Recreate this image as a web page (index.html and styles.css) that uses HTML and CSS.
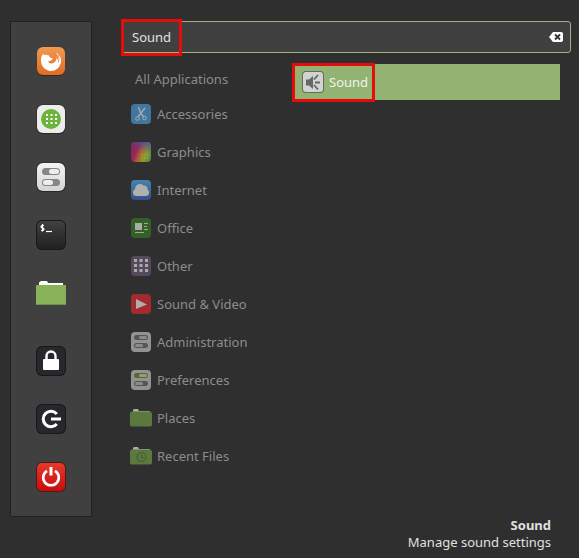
FILE: index.html
```
<!DOCTYPE html>
<html lang="en">
<head>
  <meta charset="UTF-8">
  <meta name="viewport" content="width=device-width, initial-scale=1.0">
  <title>Menu</title>
  <link rel="stylesheet" href="styles.css">
</head>
<body>

  <div class="menu">
    <nav class="favorites" aria-label="Favorites">
      <button type="button" aria-label="Firefox">
        <svg viewBox="0 0 30 30">
          <defs><linearGradient id="fox" x1="0" y1="0" x2="0" y2="1"><stop offset="0" stop-color="#f19a50"/><stop offset="1" stop-color="#e06c22"/></linearGradient></defs>
          <rect x="1" y="2" width="28" height="28" rx="6" fill="#38271f"/>
          <rect x="1" y="1" width="28" height="28" rx="6" fill="url(#fox)"/>
          <path d="M6.500 8.500Q7 7.500 8 9Q10 8.500 13 9.500L13.500 11Q15 12 17 12.500L15 14.500L12 15.500Q13.500 18 16.500 17.200Q20.500 16 20.500 12L22 14Q22.500 9.500 20 6.500Q24 9 25 13Q25.500 19 21.500 22.500Q16 27 10 23.500Q5 20.500 5 14Q5 10.500 6.500 8.500Z" fill="#fff"/>
          <path d="M22.200 8.500Q24 13 22.200 16.500" fill="none" stroke="#e87a2e" stroke-width=".8"/>
        </svg>
      </button>
      <button type="button" aria-label="Software Manager">
        <svg viewBox="0 0 30 30">
          <rect x=".5" y=".5" width="29" height="29.500" rx="6" fill="#292929"/>
          <rect x="1" y="1" width="28" height="28" rx="6" fill="#ececec"/>
          <circle cx="15" cy="15" r="10" fill="#6cb53c"/>
          <path d="M10 11h11M10 15h11M10 19h11" stroke="#fff" stroke-width="2" stroke-dasharray="2 2.500"/>
        </svg>
      </button>
      <button type="button" aria-label="System Settings">
        <svg viewBox="0 0 30 30">
          <defs><linearGradient id="light" x1="0" y1="0" x2="0" y2="1"><stop offset="0" stop-color="#f4f4f4"/><stop offset="1" stop-color="#d4d4d4"/></linearGradient></defs>
          <rect x=".5" y=".5" width="29" height="29.500" rx="6" fill="#292929"/>
          <rect x="1" y="1" width="28" height="28" rx="6" fill="url(#light)"/>
          <rect x="6" y="6" width="18" height="7" rx="3.500" fill="#868686"/>
          <rect x="13" y="7" width="10" height="5" rx="2.500" fill="#eee"/>
          <rect x="6" y="17" width="18" height="7" rx="3.500" fill="#868686"/>
          <rect x="7" y="18" width="10" height="5" rx="2.500" fill="#eee"/>
        </svg>
      </button>
      <button type="button" aria-label="Terminal">
        <svg viewBox="0 0 30 30">
          <defs><linearGradient id="dark" x1="0" y1="0" x2="0" y2="1"><stop offset="0" stop-color="#414141"/><stop offset="1" stop-color="#202020"/></linearGradient></defs>
          <rect width="30" height="30" rx="6" fill="#181818"/>
          <rect x="1" y="1" width="28" height="28" rx="5" fill="url(#dark)"/>
          <path d="M8 5.500H6L5 6.500v.5l1 1h1l1 1v.5l-1 1H5M6.500 4v7.500" fill="none" stroke="#fff" stroke-width="1.200"/>
          <path d="M10 11.500h6" stroke="#fff" stroke-width="1.200"/>
        </svg>
      </button>
      <button type="button" aria-label="Files">
        <svg viewBox="0 0 30 30">
          <path d="M3 8V4.500L5 3h6l1 2h15v3Z" fill="#fff"/>
          <rect y="7" width="30" height="20" rx="1" fill="#89b158"/>
          <path d="M1 26.500h28" stroke="#6f9346"/>
        </svg>
      </button>
      <button type="button" class="session" aria-label="Lock Screen">
        <svg viewBox="0 0 30 30">
          <rect width="30" height="30" rx="6" fill="#17171a"/>
          <rect x="1" y="1" width="28" height="28" rx="5" fill="#28282c"/>
          <path d="M10.500 14v-4a4.500 4.500 0 0 1 9 0v4" fill="none" stroke="#fff" stroke-width="2.400"/>
          <rect x="7" y="13" width="16" height="11" rx="1" fill="#fff"/>
        </svg>
      </button>
      <button type="button" aria-label="Log Out">
        <svg viewBox="0 0 30 30">
          <rect width="30" height="30" rx="6" fill="#17171a"/>
          <rect x="1" y="1" width="28" height="28" rx="5" fill="#28282c"/>
          <path d="M20.800 10A7.700 7.700 0 1 0 20.800 20" fill="none" stroke="#fff" stroke-width="3"/>
          <path d="M15 15h10" stroke="#fff" stroke-width="3"/>
        </svg>
      </button>
      <button type="button" aria-label="Quit">
        <svg viewBox="0 0 30 30">
          <defs><linearGradient id="red" x1="0" y1="0" x2="0" y2="1"><stop offset="0" stop-color="#e8382d"/><stop offset="1" stop-color="#c80d0d"/></linearGradient></defs>
          <rect width="30" height="30" rx="6" fill="#4b1b1b"/>
          <rect x="1" y="1" width="28" height="28" rx="5" fill="url(#red)"/>
          <path d="M11 8.800a7.800 7.800 0 1 0 8 0" fill="none" stroke="#fff" stroke-width="2.600"/>
          <path d="M15 5v8.500" stroke="#fff" stroke-width="3"/>
        </svg>
      </button>
    </nav>

    <main>
      <div class="search">
        <input type="text" value="Sound" aria-label="Search">
        <button type="button" class="clear" aria-label="Clear">
          <svg viewBox="0 0 14 10"><path d="M4 0h8.500L14 1v8l-1.500 1H4L0 5Z" fill="#fff"/><path d="M6 2.500l5 5M11 2.500l-5 5" stroke="#333" stroke-width="1.800"/></svg>
        </button>
        <span class="mark mark-search"></span>
      </div>

      <div class="columns">
        <ul class="categories">
          <li><button type="button" class="all">All Applications</button></li>
          <li><button type="button">
            <svg viewBox="0 0 20 20"><rect width="20" height="20" rx="4" fill="#41779f"/><g fill="none" stroke="#aaa"><circle cx="6.500" cy="14.500" r="1.800"/><circle cx="13.500" cy="14" r="1.800"/><path d="M7.500 3l2 6 3.500 4M14 4l-4 5-3 4" stroke-width="1.400"/></g></svg>
            Accessories</button></li>
          <li><button type="button">
            <svg viewBox="0 0 20 20">
              <defs>
                <linearGradient id="paint" x1="0" y1=".3" x2="1" y2=".7"><stop offset="0" stop-color="#8c2350"/><stop offset=".3" stop-color="#98285e"/><stop offset=".5" stop-color="#a9652f"/><stop offset=".75" stop-color="#8f9a30"/><stop offset="1" stop-color="#5d8a35"/></linearGradient>
                <linearGradient id="sky" x1=".4" y1=".8" x2=".7" y2="0"><stop offset=".4" stop-color="#50489a" stop-opacity="0"/><stop offset="1" stop-color="#40559a" stop-opacity=".8"/></linearGradient>
              </defs>
              <rect width="20" height="20" rx="4" fill="url(#paint)"/><rect width="20" height="20" rx="4" fill="url(#sky)"/>
              <path d="M11 13h7M10 16h7" stroke="#b5b878" stroke-dasharray="1 2"/>
            </svg>
            Graphics</button></li>
          <li><button type="button">
            <svg viewBox="0 0 20 20"><defs><linearGradient id="net" x1="0" y1="0" x2="0" y2="1"><stop offset="0" stop-color="#4783ad"/><stop offset="1" stop-color="#344f8b"/></linearGradient></defs><rect width="20" height="20" rx="4" fill="url(#net)"/><g fill="#b0b0ac"><circle cx="9" cy="9" r="5"/><circle cx="13" cy="9" r="3.500"/><rect x="2" y="9" width="16" height="7" rx="3.500"/></g></svg>
            Internet</button></li>
          <li><button type="button">
            <svg viewBox="0 0 20 20"><rect width="20" height="20" rx="4" fill="#345f28"/><rect x="4" y="5" width="7" height="7" fill="#a9ada5"/><path d="M13 5.500h4M13 8.500h3M13 11.500h4M4 14.500h9" stroke="#a0aa98"/></svg>
            Office</button></li>
          <li><button type="button">
            <svg viewBox="0 0 20 20"><rect width="20" height="20" rx="4" fill="#554a5d"/><path d="M3 4.500h14M3 9.500h14M3 14.500h14" stroke="#aaa" stroke-width="3" stroke-dasharray="3 2.500"/></svg>
            Other</button></li>
          <li><button type="button">
            <svg viewBox="0 0 20 20"><rect width="20" height="20" rx="4" fill="#a12b31"/><path d="M5 5l11 5.500L5 15Z" fill="#b5aca9"/></svg>
            Sound &amp; Video</button></li>
          <li><button type="button">
            <svg viewBox="0 0 20 20"><rect width="20" height="20" rx="4" fill="#929292"/><rect x="3" y="3" width="14" height="5" rx="2.500" fill="#555"/><rect x="8" y="4" width="8" height="3" rx="1.500" fill="#8b8b8b"/><rect x="3" y="11" width="14" height="5" rx="2.500" fill="#555"/><rect x="4" y="12" width="8" height="3" rx="1.500" fill="#8b8b8b"/></svg>
            Administration</button></li>
          <li><button type="button">
            <svg viewBox="0 0 20 20"><rect width="20" height="20" rx="4" fill="#929292"/><rect x="3" y="3" width="14" height="5" rx="2.500" fill="#566a32"/><rect x="8" y="4" width="8" height="3" rx="1.500" fill="#939b84"/><rect x="3" y="11" width="14" height="5" rx="2.500" fill="#555"/><rect x="4" y="12" width="8" height="3" rx="1.500" fill="#8b8b8b"/></svg>
            Preferences</button></li>
          <li><button type="button">
            <svg class="folder" viewBox="0 0 22 20"><path d="M3 4V2l1-1h4l1 2h11v2H3Z" fill="#aaa"/><path d="M1 3.500h19l2 1.500v12l-1 1.500H1L0 17V5Z" fill="#5b783e"/></svg>
            Places</button></li>
          <li><button type="button">
            <svg class="folder" viewBox="0 0 22 20"><path d="M3 4V2l1-1h4l1 2h11v2H3Z" fill="#aaa"/><path d="M1 3.500h19l2 1.500v12l-1 1.500H1L0 17V5Z" fill="#5b783e"/><circle cx="11.500" cy="11" r="4.500" fill="none" stroke="#425b2c"/><path d="M11.500 8.500V11l2 1" fill="none" stroke="#425b2c"/></svg>
            Recent Files</button></li>
        </ul>

        <div class="results">
          <button type="button" class="result">
            <svg viewBox="0 0 22 22"><rect width="22" height="22" rx="4" fill="#666b60"/><rect x="1" y="1" width="20" height="20" rx="3" fill="#d2d4d0"/><path d="M4 8.500h3l4-3.500v13l-4-3.500H4Z" fill="#666"/><path d="M12 8.500l4-4.500M13 11.500h5M12 14l4 4.500" stroke="#666" stroke-width="1.800"/></svg>
            Sound
            <span class="mark mark-result"></span>
          </button>
        </div>
      </div>
    </main>

    <footer>
      <strong>Sound</strong>
      <span>Manage sound settings</span>
    </footer>
  </div>

</body>
</html>
```
FILE: styles.css
```
* { box-sizing: border-box; }

body {
  margin: 0;
  background: #2f2f2f;
  color: #e0e0e0;
  font-family: "Noto Sans", "Open Sans", sans-serif;
  font-size: 13px;
}

button,
input {
  font: inherit;
  color: inherit;
  background: none;
  border: none;
  padding: 0;
}

button { cursor: pointer; }

svg {
  display: block;
  flex: none;
}

.menu {
  display: grid;
  grid-template-columns: 82px 1fr;
  column-gap: 29px;
  padding: 21px 8px 7px 10px;
}

.favorites {
  display: flex;
  flex-direction: column;
  align-items: center;
  gap: 28px;
  padding: 24px 0;
  background: #404040;
  border: 1px solid #212121;
}

.favorites svg {
  width: 30px;
  height: 30px;
}

.favorites .session { margin-top: 10px; }

.search {
  position: relative;
  display: flex;
  align-items: center;
  height: 32px;
  padding: 0 7px 0 10px;
  background: #404040;
  border: 1px solid #a0b181;
  border-radius: 3px;
}

.search input {
  flex: 1;
  min-width: 0;
  outline: none;
}

.clear svg {
  width: 14px;
  height: 10px;
}

/* red highlight frames */
.mark {
  position: absolute;
  border: 3px solid #e60c0c;
  pointer-events: none;
}

.mark-search {
  top: -3px;
  left: -1px;
  width: 61px;
  height: 37px;
}

.mark-result {
  top: -1px;
  left: -2px;
  width: 83px;
  height: 39px;
}

.columns {
  display: flex;
  padding: 10px 11px 0 10px;
}

.categories {
  width: 163px;
  margin: 0;
  padding: 0;
  list-style: none;
  color: #8c8c8c;
}

.categories button {
  display: flex;
  align-items: center;
  gap: 6px;
  width: 100%;
  height: 38px;
  text-align: left;
}

.categories .all {
  height: 32px;
  padding-left: 4px;
}

.categories svg {
  width: 20px;
  height: 20px;
}

.categories .folder {
  width: 22px;
  margin: 0 -1px;
}

.results {
  flex: 1;
  padding-top: 1px;
}

.result {
  position: relative;
  display: flex;
  align-items: center;
  gap: 5px;
  width: 100%;
  height: 36px;
  padding-left: 8px;
  background: #92b372;
  color: #f0f3ec;
}

.result svg {
  width: 22px;
  height: 22px;
}

footer {
  grid-column: 1 / -1;
  display: flex;
  flex-direction: column;
  align-items: flex-end;
  padding-right: 20px;
  line-height: 17px;
}
```
